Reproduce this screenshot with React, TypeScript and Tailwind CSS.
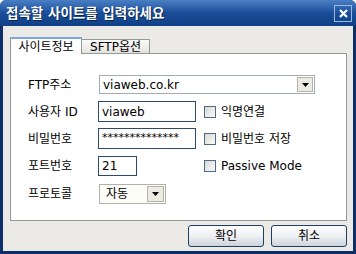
const font = "font-['DejaVu_Sans','Noto_Sans_CJK_KR',sans-serif]";

function Arrow() {
  return (
    <svg width="7" height="4" viewBox="0 0 7 4">
      <path d="M0 0h7L3.5 4z" fill="#000" />
    </svg>
  );
}

function Check({ label }: { label: string }) {
  return (
    <div className="flex items-center gap-[5px] ml-[8px]">
      <span className="w-[12px] h-[12px] border border-[#4d6a8a] bg-gradient-to-br from-[#d8d8d2] to-[#fbfbf9]" />
      <span className="text-[12px] text-black">{label}</span>
    </div>
  );
}

export default function App() {
  return (
    <div className={`${font} w-[356px] h-[254px] flex flex-col bg-[#0c2f6a] rounded-t-[6px] overflow-hidden`}>
      <div className="h-[26px] shrink-0 flex items-center justify-between pl-[6px] pr-[4px] bg-gradient-to-b from-[#4a7fc4] via-[#1a4e99] to-[#0f3f86]">
        <span className="text-white font-bold text-[13.5px] [text-shadow:1px_1px_0_#0a2550]">
          접속할 사이트를 입력하세요
        </span>
        <div className="w-[18px] h-[17px] border border-[#9fb8de] flex items-center justify-center">
          <svg width="9" height="9" viewBox="0 0 9 9">
            <path d="M1 1l7 7M8 1L1 8" stroke="#fff" strokeWidth="2.2" />
          </svg>
        </div>
      </div>
      <div className="flex-1 mx-[3px] mb-[3px] bg-[#ebeae7] flex flex-col pl-[7px] pr-[6px] pt-[10px]">
        <div className="flex items-end h-[17px]">
          <div className="h-[17px] w-[72px] bg-white border border-b-0 border-[#919b9c] border-t-2 border-t-[#7aa7e0] flex items-center justify-center text-[12px] relative z-10 -mb-px">
            사이트정보
          </div>
          <div className="h-[14px] w-[68px] bg-gradient-to-b from-[#fbfbfa] to-[#e4e3de] border border-b-0 border-l-0 border-[#919b9c] flex items-center justify-center text-[12px]">
            SFTP옵션
          </div>
        </div>
        <div className="h-[168px] bg-white border border-[#919b9c] pl-[17px] pt-[17px] text-[12px] text-black">
          <div className="h-[27px] flex items-center">
            <span className="w-[71px]">FTP주소</span>
            <div className="w-[216px] h-[19px] border border-[#a4adb7] flex items-center justify-between pl-[3px] pr-px">
              <span>viaweb.co.kr</span>
              <div className="w-[16px] h-[15px] bg-[#ecebe3] border border-[#b4b4a8] flex items-center justify-center">
                <Arrow />
              </div>
            </div>
          </div>
          <div className="h-[27px] flex items-center">
            <span className="w-[70px]">사용자 ID</span>
            <div className="w-[98px] h-[21px] border border-[#2d4a68] flex items-center pl-[3px]">viaweb</div>
            <Check label="익명연결" />
          </div>
          <div className="h-[27px] flex items-center">
            <span className="w-[70px]">비밀번호</span>
            <div className="w-[98px] h-[21px] border border-[#2d4a68] flex items-center pl-[3px] text-[11px] overflow-hidden whitespace-nowrap">
              **************
            </div>
            <Check label="비밀번호 저장" />
          </div>
          <div className="h-[28px] flex items-center">
            <span className="w-[70px]">포트번호</span>
            <div className="w-[39px] h-[20px] border border-[#2d4a68] flex items-center pl-[3px]">21</div>
            <div className="ml-[59px]">
              <Check label="Passive Mode" />
            </div>
          </div>
          <div className="h-[27px] flex items-center">
            <span className="w-[71px]">프로토콜</span>
            <div className="w-[67px] h-[20px] border border-[#b0b3a8] bg-[#fcfcf7] flex items-center justify-between pl-[6px] pr-px">
              <span>자동</span>
              <div className="w-[17px] h-[16px] bg-[#ecebe3] border border-[#b4b4a8] flex items-center justify-center">
                <Arrow />
              </div>
            </div>
          </div>
        </div>
        <div className="flex justify-end gap-[7px] mt-[4px]">
          {["확인", "취소"].map((t) => (
            <div
              key={t}
              className="w-[76px] h-[22px] rounded-[3px] border border-[#1e3d63] bg-gradient-to-b from-[#fefefe] via-[#eef0f3] to-[#cdd4de] flex items-center justify-center text-[12px]"
            >
              {t}
            </div>
          ))}
        </div>
      </div>
    </div>
  );
}
